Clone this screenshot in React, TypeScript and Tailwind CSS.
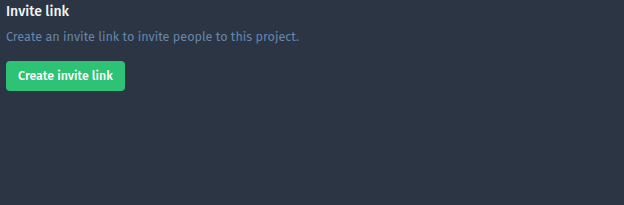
import React from 'react';

const App: React.FC = () => {
  return (
    <div
      className="min-h-screen w-full bg-[#2b3544] px-[6px] pt-[3px]"
      style={{ fontFamily: '"Fira Sans", "Noto Sans", sans-serif' }}
    >
      <h2 className="text-[14px] font-medium leading-[18px] text-[#f2f4f7]">Invite link</h2>
      <p className="mt-[8px] text-[12.6px] leading-[16px] text-[#6786ab]">
        Create an invite link to invite people to this project.
      </p>
      <button className="mt-[16px] h-[30px] rounded-[4px] bg-[#2ec274] px-[12px] text-[12.4px] font-medium text-white">
        Create invite link
      </button>
    </div>
  );
};

export default App;
